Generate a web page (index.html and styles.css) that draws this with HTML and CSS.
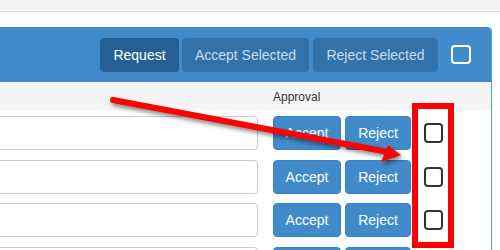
FILE: index.html
```html
<!DOCTYPE html>
<html>
<head>
<meta charset="utf-8">
<link rel="stylesheet" href="styles.css">
</head>
<body>
<div class="topbar"></div>
<div class="page">
  <div class="panel">
    <div class="panel-heading">
      <button class="hbtn hbtn-dark">Request</button>
      <button class="hbtn hbtn-mid hbtn-accept">Accept Selected</button>
      <button class="hbtn hbtn-mid hbtn-reject">Reject Selected</button>
      <span class="hcheck"></span>
    </div>
    <div class="thead">
      <span></span>
      <span class="th">Approval</span>
    </div>
    <div class="rows">
      <div class="row"><div class="field"></div><button class="btn">Accept</button><button class="btn">Reject</button><span class="check"></span></div>
      <div class="row"><div class="field"></div><button class="btn">Accept</button><button class="btn">Reject</button><span class="check"></span></div>
      <div class="row"><div class="field"></div><button class="btn">Accept</button><button class="btn">Reject</button><span class="check"></span></div>
      <div class="row"><div class="field"></div><button class="btn"></button><button class="btn"></button><span class="check"></span></div>
    </div>
  </div>
</div>
<svg class="annot" width="500" height="250" viewBox="0 0 500 250">
  <g class="arrow">
    <line x1="113" y1="100" x2="388" y2="152" stroke="#ff0000" stroke-width="6" stroke-linecap="round"/>
    <polygon points="401,155 381,162 388,145" fill="#ff0000"/>
  </g>
  <rect x="415" y="106" width="36" height="139" fill="none" stroke="#ff0000" stroke-width="6"/>
</svg>
</body>
</html>
```
FILE: styles.css
```css
html, body {
  margin: 0;
  padding: 0;
  background: #ffffff;
  font-family: "Liberation Sans", Arial, sans-serif;
  overflow: hidden;
  height: 250px;
}
.topbar {
  height: 11px;
  background: #f5f5f5;
  border-bottom: 1px solid #dddddd;
}
.page {
  padding-top: 15px;
}
.panel {
  margin-left: -20px;
  width: 512px;
  box-sizing: border-box;
  border-right: 1px solid #5d9ad0;
  border-top-right-radius: 4px;
  height: 224px;
  overflow: hidden;
}
.panel-heading {
  height: 55px;
  background: #428bca;
  border-top-right-radius: 4px;
  display: flex;
  align-items: center;
  justify-content: flex-end;
  padding-right: 20px;
  box-sizing: border-box;
}
.hbtn {
  height: 34px;
  border: none;
  border-radius: 4px;
  font-family: "Liberation Sans", Arial, sans-serif;
  font-size: 14px;
  padding: 0;
  margin-left: 4px;
  white-space: nowrap;
}
.hbtn-dark {
  background: #255f94;
  color: #ffffff;
  width: 79px;
}
.hbtn-mid {
  background: #3272aa;
  color: #c9dcec;
}
.hbtn-accept { width: 127px; margin-left: 3px; }
.hbtn-reject { width: 125px; }
.hcheck {
  width: 20px;
  height: 19px;
  box-sizing: border-box;
  border: 2px solid #ffffff;
  border-radius: 4px;
  margin-left: 13px;
}
.thead {
  height: 28px;
  background: #f5f5f5;
  display: grid;
  grid-template-columns: 278px 160px;
  column-gap: 15px;
  align-items: center;
}
.th {
  font-size: 12px;
  color: #333333;
  padding-top: 1px;
}
.rows {
  padding-top: 6px;
  display: flex;
  flex-direction: column;
  gap: 9px;
}
.row {
  display: grid;
  grid-template-columns: 289px 68px 66px 19px;
  column-gap: 4px;
  align-items: center;
  height: 34px;
}
.row:nth-child(odd) { margin-bottom: 1px; }
.field {
  height: 34px;
  box-sizing: border-box;
  border: 1px solid #cccccc;
  border-radius: 4px;
  background: #ffffff;
  margin-right: 11px;
}
.btn {
  height: 34px;
  box-sizing: border-box;
  background: #428bca;
  border: 1px solid #3a82c2;
  border-radius: 4px;
  color: #ffffff;
  font-family: "Liberation Sans", Arial, sans-serif;
  font-size: 14px;
  padding: 0;
}
.check {
  width: 19px;
  height: 20px;
  box-sizing: border-box;
  border: 2px solid #333333;
  border-radius: 4px;
  margin-left: 9px;
}
.annot {
  position: absolute;
  top: 0;
  left: 0;
  pointer-events: none;
}
.arrow {
  filter: drop-shadow(2px 3px 2px rgba(0, 0, 0, 0.45));
}
```
